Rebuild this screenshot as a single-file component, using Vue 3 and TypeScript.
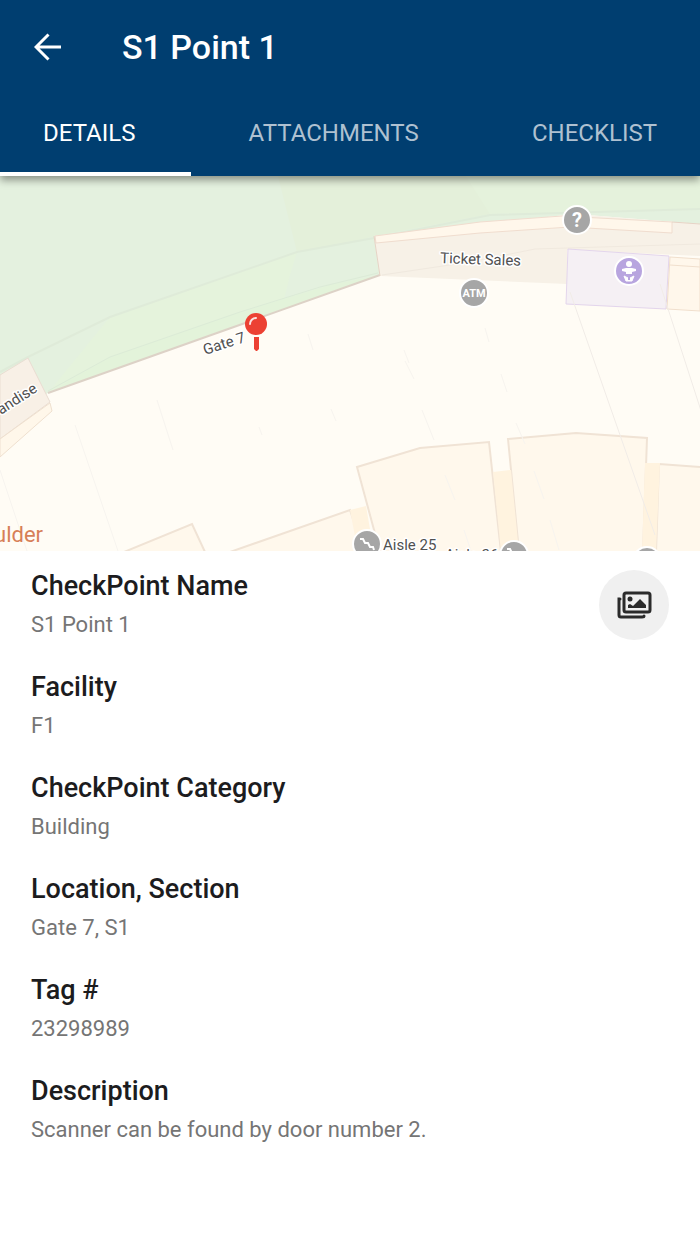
<script setup lang="ts">
import { ref } from 'vue'

interface Tab {
  id: string
  label: string
}

interface Field {
  label: string
  value: string
}

const tabs: Tab[] = [
  { id: 'details', label: 'DETAILS' },
  { id: 'attachments', label: 'ATTACHMENTS' },
  { id: 'checklist', label: 'CHECKLIST' },
]

const fields: Field[] = [
  { label: 'CheckPoint Name', value: 'S1 Point 1' },
  { label: 'Facility', value: 'F1' },
  { label: 'CheckPoint Category', value: 'Building' },
  { label: 'Location, Section', value: 'Gate 7, S1' },
  { label: 'Tag #', value: '23298989' },
  { label: 'Description', value: 'Scanner can be found by door number 2.' },
]

const active = ref<string>('details')
</script>

<template>
  <div class="screen">
    <header class="app-bar">
      <div class="title-row">
        <button class="back" type="button" aria-label="Back">
          <svg viewBox="0 0 28 28" width="28" height="28" aria-hidden="true">
            <path d="M27 14H2.500M14.500 1.500 2 14l12.500 12.500" fill="none" stroke="#fff" stroke-width="3" />
          </svg>
        </button>
        <h1>S1 Point 1</h1>
      </div>
      <nav class="tabs" role="tablist">
        <button
          v-for="tab in tabs"
          :key="tab.id"
          class="tab"
          :class="{ active: active === tab.id }"
          type="button"
          role="tab"
          :aria-selected="active === tab.id"
          @click="active = tab.id"
        >
          {{ tab.label }}
        </button>
      </nav>
    </header>

    <main>
      <svg class="map" viewBox="0 176 700 375" preserveAspectRatio="xMidYMid slice" role="img" aria-label="Map of Gate 7">
        <rect x="0" y="176" width="700" height="375" fill="#fffcf5" />

        <!-- lawn -->
        <path d="M0 176H700V224L575 214 374 236 380 275 48 393 0 420Z" fill="#e4f1df" />
        <path d="M278 176H466L482 198 490 214 374 236 350 243 297 252Z" fill="#e4f0da" />
        <path d="M466 176H700V210L490 214Z" fill="#e5f2dc" />
        <path d="M110 317 297 252 290 275 284 300 220 328 48 393Z" fill="#e5f3dc" />
        <path d="M48 393 110 357 240 312 330 285 380 275Z" fill="#e3f3da" />
        <path d="M0 372 28 357 110 317 297 252 374 238 490 215 700 209" fill="none" stroke="#dfebd9" stroke-width="2" />
        <path d="M48 391 110 357 240 312 320 287 378 273" fill="none" stroke="#dcebd7" />
        <path d="M48 393 380 275" fill="none" stroke="#ddd2c7" stroke-width="2" />

        <!-- ticket hall -->
        <path d="M374 236 575 214 700 224V256L567 250V284L380 276Z" fill="#f7f1e7" />
        <path d="M375 236 480 222 562 216 672 222V233L570 227 480 233 376 243Z" fill="#fff7eb" stroke="#f0ddcf" />
        <path d="M672 222 700 224M380 276 374 236" fill="none" stroke="#e6d3c5" />
        <path d="M382 275 470 262 535 249 700 244" fill="none" stroke="#f0e9df" />
        <path d="M568 249 669 256 666 309 566 304Z" fill="#f5f0f4" stroke="#e3d5ec" />
        <path d="M670 257 700 259V311L667 309Z" fill="#fff7eb" stroke="#f1dfcd" />
        <path d="M670 265 700 267" stroke="#f1dfcd" />

        <!-- shop at the left -->
        <path d="M0 375 28 358 50 402 0 439Z" fill="#f8f0e6" stroke="#e9ddd2" />
        <path d="M0 439 50 403 52 411 0 457Z" fill="#fff7ea" stroke="#efe0cf" />

        <!-- seating blocks -->
        <g fill="#fff8ec" stroke="#f0e3d5" stroke-width="2">
          <path d="M124 552 192 524 205 552Z" />
          <path d="M230 552 350 510 364 552Z" />
          <path d="M357 467 420 448 489 442 501 552H380Z" />
          <path d="M508 439 576 433 647 438 643 552H519Z" />
          <path d="M659 464 701 467V552H656Z" />
        </g>
        <path d="M350 510 366 506 374 552H358ZM493 472 511 470 519 552H501ZM645 463H660L656 552H642Z" fill="#fff3df" />

        <!-- section guides -->
        <path
          d="M0 470 27 551M75 425 118 551M157 400 173 450M259 427 262 435M331 409 336 421M405 361 414 379M422 410 434 440M445 475 455 500M464 530 471 551M501 374 507 392M516 423 525 444M534 471 544 499M550 520 559 550M485 328 489 342M404 350 409 363M308 334 313 350"
          fill="none"
          stroke="#f7f4ef"
        />
        <path d="M570 292 655 535M660 284 704 420" fill="none" stroke="#f1ece7" />

        <!-- places -->
        <g class="place">
          <g fill="#a6a6a6" stroke="#fff" stroke-width="2">
            <circle cx="577" cy="220" r="14" />
            <circle cx="474" cy="293" r="14" />
            <circle cx="367" cy="544" r="14" />
            <circle cx="514" cy="555" r="14" />
            <circle cx="647" cy="561" r="14" />
            <circle cx="629" cy="271" r="14" fill="#b8a5df" />
          </g>
          <text class="question" x="577" y="227">?</text>
          <text class="atm" x="474" y="297">ATM</text>
          <g fill="#fff">
            <circle cx="629" cy="264" r="3" />
            <path d="M622 269 626 268H632L636 269V271L632 272V274H626V272L622 271Z" />
            <path d="M624 276 628 278 627 279 629 281 626 281ZM634 276 630 278 631 279 629 281 632 281Z" stroke="#fff" stroke-linejoin="round" />
          </g>
          <path d="M360 539H363L365 543H368L370 547H373L374 550M507 549H510L512 553" fill="none" stroke="#fff" stroke-width="2" />
        </g>
        <g class="label">
          <text x="440" y="263" transform="rotate(2 440 263)">Ticket Sales</text>
          <text x="205" y="355" transform="rotate(-18 205 355)">Gate 7</text>
          <text x="1" y="415" transform="rotate(-33 1 415)">andise</text>
          <text x="383" y="550">Aisle 25</text>
          <text x="445" y="560">Aisle 26</text>
        </g>
        <text class="city" x="-6" y="542">ulder</text>

        <!-- checkpoint pin -->
        <circle cx="256" cy="324" r="11" fill="#ec4133" />
        <path d="M250 324a6 6 0 0 1 6-6" fill="none" stroke="#fff" stroke-width="2" stroke-linecap="round" opacity=".85" />
        <path d="M254 337h5v12l-2 2h-1l-2-2z" fill="#ec4133" />
      </svg>

      <section class="info">
        <dl>
          <div v-for="field in fields" :key="field.label" class="field">
            <dt>{{ field.label }}</dt>
            <dd>{{ field.value }}</dd>
          </div>
        </dl>
        <button class="gallery" type="button" aria-label="View photos">
          <svg viewBox="0 0 36 30" width="36" height="30" aria-hidden="true">
            <rect x="8" y="3" width="26" height="19" rx="2" fill="none" stroke="#2b2b2b" stroke-width="3" />
            <path d="M4 9H3V25Q3 27 5 27H26Q28 27 28 26" fill="none" stroke="#2b2b2b" stroke-width="3" stroke-linecap="round" />
            <circle cx="14" cy="9" r="2.500" fill="#2b2b2b" />
            <path d="M12 18v-3l2-1 3 2 7-7 6 6v3z" fill="#2b2b2b" />
          </svg>
        </button>
      </section>
    </main>
  </div>
</template>

<style>
body {
  margin: 0;
  background: #fff;
}
</style>

<style scoped>
.screen {
  font-family: Roboto, "Liberation Sans", sans-serif;
  background: #fff;
  min-height: 100vh;
}

button {
  border: 0;
  margin: 0;
  font-family: inherit;
  cursor: pointer;
}

.app-bar {
  position: relative;
  background: #003e70;
  color: #fff;
  box-shadow: 0 4px 8px rgba(0, 0, 0, 0.4);
}

.title-row {
  display: flex;
  align-items: center;
  gap: 52px;
  height: 94px;
  padding: 0 26px;
}

.back {
  display: flex;
  padding: 8px;
  background: none;
}

h1 {
  margin: 0;
  font-size: 34px;
  line-height: 40px;
  font-weight: 500;
}

.tabs {
  display: flex;
  justify-content: space-between;
  height: 82px;
}

.tab {
  padding: 0 56px;
  background: none;
  border-bottom: 4px solid transparent;
  color: #afc1d1;
  font-size: 24px;
  line-height: 28px;
}

.tab:first-child {
  padding-left: 43px;
}

.tab:last-child {
  padding-right: 43px;
}

.tab.active {
  color: #fff;
  border-bottom-color: #fff;
}

.map {
  display: block;
  width: 100%;
}

.label text {
  font-size: 15px;
  fill: #505050;
  stroke: #fff;
  stroke-width: 3px;
  stroke-linejoin: round;
  paint-order: stroke;
}

.place text {
  fill: #fff;
  font-weight: 700;
  text-anchor: middle;
}

.place .question {
  font-size: 20px;
}

.place .atm {
  font-size: 11px;
}

.city {
  font-size: 22px;
  fill: #d77f58;
}

.info {
  display: flex;
  justify-content: space-between;
  align-items: flex-start;
  padding: 19px 31px;
}

dl {
  margin: 0;
}

.field {
  height: 101px;
}

dt {
  color: #1c1c1e;
  font-size: 27px;
  line-height: 32px;
  font-weight: 500;
}

dd {
  margin: 8px 0 0;
  color: #757575;
  font-size: 22px;
  line-height: 30px;
}

.gallery {
  display: flex;
  align-items: center;
  justify-content: center;
  flex: none;
  width: 70px;
  height: 70px;
  padding: 0;
  border-radius: 50%;
  background: #f0f0f0;
}
</style>
